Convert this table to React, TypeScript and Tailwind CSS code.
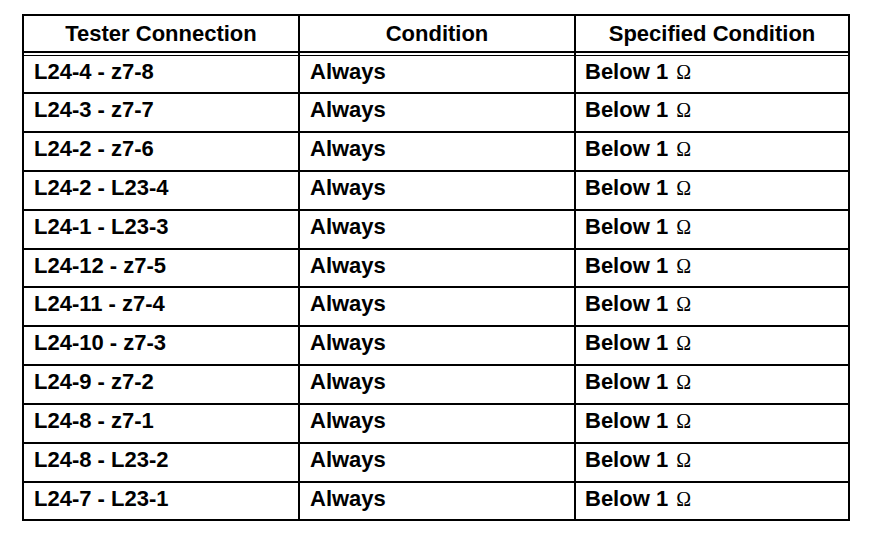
import React from "react";

const rows: [string, string][] = [
  ["L24-4 - z7-8", "Always"],
  ["L24-3 - z7-7", "Always"],
  ["L24-2 - z7-6", "Always"],
  ["L24-2 - L23-4", "Always"],
  ["L24-1 - L23-3", "Always"],
  ["L24-12 - z7-5", "Always"],
  ["L24-11 - z7-4", "Always"],
  ["L24-10 - z7-3", "Always"],
  ["L24-9 - z7-2", "Always"],
  ["L24-8 - z7-1", "Always"],
  ["L24-8 - L23-2", "Always"],
  ["L24-7 - L23-1", "Always"],
];

export default function App() {
  return (
    <div
      className="w-[880px] h-[534px] bg-white pt-[14px] pl-[22px] text-black"
      style={{ fontFamily: '"Liberation Sans", Arial, sans-serif' }}
    >
      <div className="w-[828px] border-2 border-black">
        {/* header */}
        <div className="flex h-[37px] border-b-2 border-black text-[22px] font-bold leading-[24px]">
          <div className="w-[276px] border-r-2 border-black flex items-center justify-center pt-[1px]">
            Tester Connection
          </div>
          <div className="w-[276px] border-r-2 border-black flex items-center justify-center pt-[1px]">
            Condition
          </div>
          <div className="w-[272px] flex items-center justify-center pt-[1px]">
            Specified Condition
          </div>
        </div>
        {/* double line gap */}
        <div className="flex h-[2px]">
          <div className="w-[276px] border-r-2 border-black" />
          <div className="w-[276px] border-r-2 border-black" />
          <div className="w-[272px]" />
        </div>
        <div className="h-[1px] bg-black" />
        {rows.map(([a, b], i) => {
          const last = i === rows.length - 1;
          return (
            <div
              key={i}
              className={
                "flex text-[22px] font-bold leading-[24px] " +
                (i === 0 ? "h-[38px] border-b-2 border-black" : last ? "h-[36px]" : "h-[38.9px] border-b-2 border-black")
              }
            >
              <div className="w-[276px] border-r-2 border-black pl-[10px] pt-[4px]">{a}</div>
              <div className="w-[276px] border-r-2 border-black pl-[10px] pt-[4px]">{b}</div>
              <div className="w-[272px] pl-[9px] pt-[4px] whitespace-nowrap">
                Below 1{" "}
                <span
                  className="font-normal text-[20px] ml-[2px]"
                  style={{ fontFamily: '"Liberation Serif", "Times New Roman", serif' }}
                >
                  Ω
                </span>
              </div>
            </div>
          );
        })}
      </div>
    </div>
  );
}
